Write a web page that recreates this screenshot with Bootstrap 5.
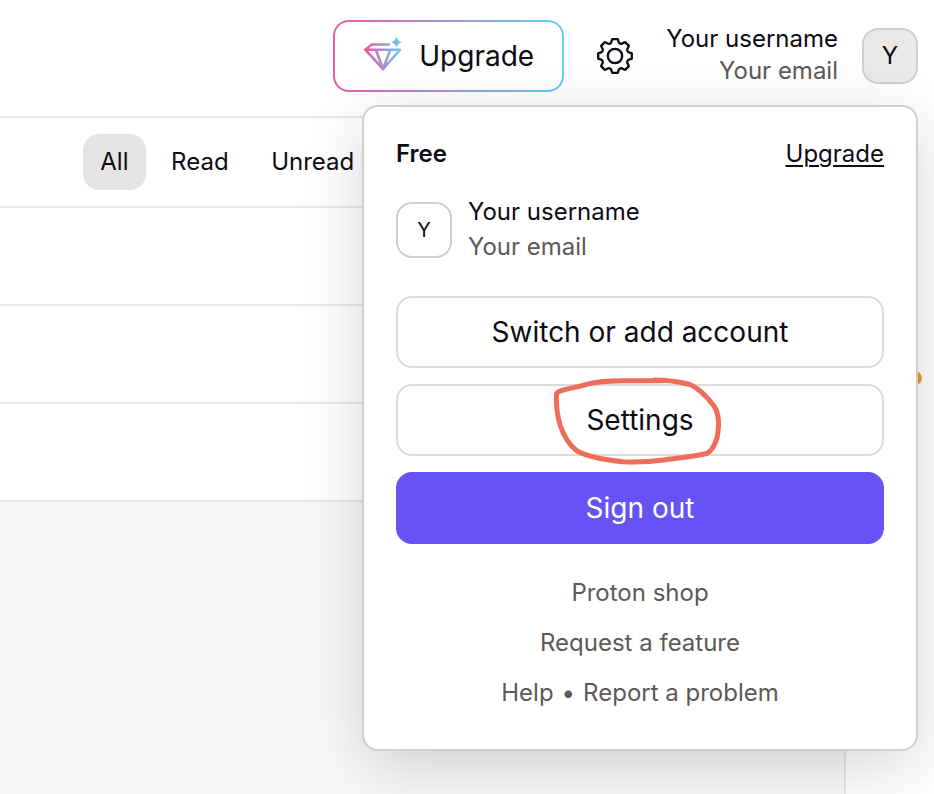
<!DOCTYPE html>
<html lang="en">
<head>
<meta charset="utf-8">
<meta name="viewport" content="width=device-width, initial-scale=1">
<title>Account menu</title>
<link href="https://cdn.jsdelivr.net/npm/bootstrap@5.3.0/dist/css/bootstrap.min.css" rel="stylesheet">
<style>
body{font-family:Inter,"Liberation Sans",sans-serif;font-size:24px;line-height:32px;color:#0c0c14;background:#fff;height:794px;overflow:hidden}
.weak{color:#5c5958}
.topbar{height:116px;padding:20px 16px 0 0}
.btn-up{width:231px;height:72px;border:2px solid transparent;border-radius:16px;background:linear-gradient(#fff,#fff) padding-box,linear-gradient(90deg,#e95ba8,#5fd0f8) border-box;font-size:28px;padding:0 0 0 29px;color:#0c0c14}
.btn-up:hover{background:linear-gradient(#fff,#fff) padding-box,linear-gradient(90deg,#e95ba8,#5fd0f8) border-box}
.btn-up svg{margin-bottom:2px}
.upg-label{margin-left:15px}
.gear{margin:18px 0 0 33px}
.who{margin:3px 24px 0 33px}
.initial{width:56px;height:56px;border:2px solid #cfcfcf;border-radius:16px}
.initial-fill{background:#eae9e7}
.mail-list{width:846px}
.filters{height:92px;border-top:2px solid #eae7e4;border-bottom:2px solid #eae7e4;padding-left:83px}
.filters .nav-link{height:56px;line-height:56px;padding:0 17.3px;border-radius:16px;color:#0c0c14}
.filters .nav-link.active{background:#e5e4e2;color:#0c0c14}
.mail-row{height:98px;border-bottom:2px solid #eae7e4}
.pane{height:292px;background:#f8f8f6;border-right:2px solid #eae7e4}
.account-menu{left:362px;top:105px;width:556px;height:646px;border:2px solid #cfcfcf;border-radius:16px;background:#fff;padding:31px 32px;box-shadow:0 16px 64px rgba(0,0,0,.16)}
.profile{margin-top:24px}
.profile .initial{margin-top:2px}
.profile-text{line-height:35px}
.menu-actions{margin-top:32px}
.menu-btn{height:72px;font-size:28px;border:2px solid #dedbd9;border-radius:16px;color:#0c0c14;padding:0}
.menu-btn.primary{background:#6652f5;border-color:#6652f5;color:#fff}
.menu-links{gap:18px;margin-top:33px}
.menu-links a,.plan-link{color:inherit}
.plan-link{text-underline-offset:3px;text-decoration-thickness:2px}
.scribble{left:550px;top:372px;pointer-events:none}
.notice{left:908px;top:371px;width:14px;height:14px;background:#ee9a30}
</style>
<script src="https://cdn.jsdelivr.net/npm/bootstrap@5.3.0/dist/js/bootstrap.bundle.min.js"></script>
</head>
<body class="position-relative">
<header class="topbar d-flex justify-content-end align-items-start">
  <button class="btn btn-up d-flex align-items-center" type="button">
    <svg width="40" height="36" viewBox="0 0 40 36" fill="none" stroke="url(#gem)" stroke-width="2.5" stroke-linejoin="round" stroke-linecap="round">
      <defs><linearGradient id="gem" gradientUnits="userSpaceOnUse" x1="1" y1="0" x2="39" y2="0"><stop stop-color="#ee56a4"/><stop offset="1" stop-color="#5fd0f8"/></linearGradient></defs>
      <path d="M25 7.6H7.5L1.3 12.6L19 32.2L36 12.8H2.2M12 13L19 32L26.2 13"/>
      <path stroke="none" fill="url(#gem)" d="M32.500 0Q33.800 4 37.700 5.200Q33.800 6.400 32.500 10.400Q31.200 6.400 27.300 5.200Q31.200 4 32.500 0Z"/>
    </svg>
    <span class="upg-label">Upgrade</span>
  </button>
  <svg class="gear" width="36" height="36" viewBox="-18 -18 36 36" fill="none" stroke="#0c0c14" stroke-width="2.3" stroke-linejoin="round">
    <circle r="7.2"/>
    <path d="M-2.7-16.8H2.7L3.9-13.3Q5-12 6.65-12.16L10.1-13.9L13.9-10.1L12.16-6.65Q12-5 13.3-3.9L16.8-2.7V2.7L13.3 3.9Q12 5 12.16 6.65L13.9 10.1L10.1 13.9L6.65 12.16Q5 12 3.9 13.3L2.7 16.8H-2.7L-3.9 13.3Q-5 12-6.65 12.16L-10.1 13.9L-13.9 10.1L-12.16 6.65Q-12 5-13.3 3.9L-16.8 2.7V-2.7L-13.3-3.9Q-12-5-12.16-6.65L-13.9-10.1L-10.1-13.9L-6.65-12.16Q-5-12-3.9-13.3Z"/>
  </svg>
  <div class="text-end who"><div>Your username</div><div class="weak">Your email</div></div>
  <div class="initial initial-fill d-flex align-items-center justify-content-center mt-2">Y</div>
</header>
<main class="mail-list">
  <nav class="filters nav align-items-center flex-nowrap">
    <a class="nav-link active" href="#">All</a>
    <a class="nav-link ms-2" href="#">Read</a>
    <a class="nav-link ms-2" href="#">Unread</a>
  </nav>
  <div class="mail-row"></div>
  <div class="mail-row"></div>
  <div class="mail-row"></div>
  <div class="pane"></div>
</main>
<span class="notice position-absolute rounded-circle"></span>
<section class="account-menu position-absolute">
  <div class="d-flex justify-content-between"><span class="fw-semibold">Free</span><a class="plan-link" href="#">Upgrade</a></div>
  <div class="profile d-flex align-items-center">
    <div class="initial d-flex align-items-center justify-content-center fs-5">Y</div>
    <div class="profile-text ms-3"><div>Your username</div><div class="weak">Your email</div></div>
  </div>
  <div class="menu-actions d-grid gap-3">
    <button class="btn menu-btn" type="button">Switch or add account</button>
    <button class="btn menu-btn" type="button">Settings</button>
    <button class="btn menu-btn primary" type="button">Sign out</button>
  </div>
  <div class="menu-links weak d-flex flex-column align-items-center">
    <a class="text-decoration-none" href="#">Proton shop</a>
    <a class="text-decoration-none" href="#">Request a feature</a>
    <div class="d-flex gap-2"><a class="text-decoration-none" href="#">Help</a><span>•</span><a class="text-decoration-none" href="#">Report a problem</a></div>
  </div>
</section>
<svg class="scribble position-absolute" width="180" height="96" viewBox="550 372 180 96" fill="none" stroke="#ee6d5b" stroke-width="5" stroke-linecap="round" stroke-linejoin="round">
  <path d="M654 380C668 380 680 382 690 384.5C700 389 708 398 714 406C720 415 719 428 717 438C714 446 712 451 706.700 453.500C692 457 678 458 663 460C650 462 637 462.500 623 461.800C606 460 588 457 577 451C568 444 563 434 560 425C557 414 556 402 556.500 394C558 390 570 389 583 385.300C597 381 610 381 624 380.800H662"/>
</svg>
</body>
</html>
